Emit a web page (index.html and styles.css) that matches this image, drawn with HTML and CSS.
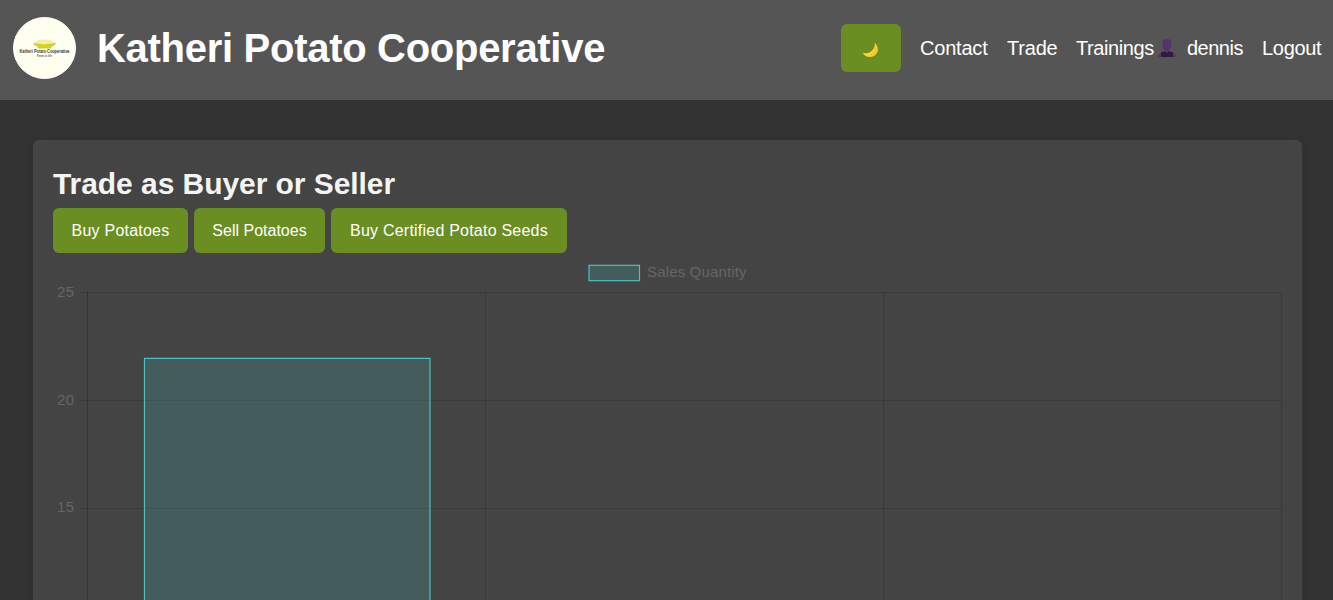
FILE: index.html
```html
<!DOCTYPE html>
<html lang="en">
<head>
<meta charset="utf-8">
<title>Katheri Potato Cooperative</title>
<link rel="stylesheet" href="styles.css">
</head>
<body>
<header class="site-header">
  <svg class="logo" viewBox="0 0 64 64" role="img" aria-label="Katheri Potato Cooperative">
    <ellipse cx="32.500" cy="32" rx="31" ry="30.500" fill="#fffff0" stroke="#fff" stroke-width="1"/>
    <ellipse cx="32.500" cy="26" rx="9" ry="2.600" fill="#f1efae"/>
    <path d="M21 26.800Q32 29.500 44 26.800L42.500 29.500H41L38.500 32.500H26.500L24 29.500H22.500Z" fill="#d3d222"/>
    <text class="logo-name" x="32.500" y="36.600" text-anchor="middle" textLength="50" lengthAdjust="spacingAndGlyphs">Katheri Potato Cooperative</text>
    <text class="logo-motto" x="32.500" y="40.500" text-anchor="middle" textLength="15" lengthAdjust="spacingAndGlyphs">Farm to life</text>
  </svg>
  <h1 class="site-title">Katheri Potato Cooperative</h1>
  <nav class="nav">
    <button class="theme-toggle" aria-label="Theme">
      <svg class="moon" viewBox="0 0 16 16"><path d="M13 1Q16 4 15.800 8.500Q14.500 14.800 8 15Q3 15 .5 10.500Q5 12.500 9 9.500Q13 6.500 13 1Z" fill="#fdcf35"/><path d="M13.800 6.500Q14 12.500 8 13" fill="none" stroke="#f4b52e" stroke-width="1"/></svg>
    </button>
    <a class="nav-link contact">Contact</a>
    <a class="nav-link trade">Trade</a>
    <a class="nav-link trainings">Trainings</a>
    <svg class="user" viewBox="0 0 18 18"><path d="M5 1Q9-1 13 1L13.500 5L14 6L13 8Q12 11 11 11V13H7V11Q5 10 5 8L4 6L4.500 5Z" fill="#55336b"/><path d="M0 18Q1 14 4 13.500L6.500 12.500L8 14H10L11.500 12.500L14 13.500Q17 14 18 18Z" fill="#55336b"/><path d="M3 18V13.300L7 12.300L8 13.500H10L11 12.300L15 13.300V18Z" fill="#321b42"/></svg>
    <a class="nav-link dennis">dennis</a>
    <a class="nav-link logout">Logout</a>
  </nav>
</header>
<main class="card">
  <h2 class="card-title">Trade as Buyer or Seller</h2>
  <div class="actions">
    <button class="action buy">Buy Potatoes</button>
    <button class="action sell">Sell Potatoes</button>
    <button class="action seeds">Buy Certified Potato Seeds</button>
  </div>
  <svg class="chart" viewBox="0 0 1229 347" width="1229" height="347">
    <g class="grid">
      <path d="M27 39.500H1229M27 147.500H1229M27 255.500H1229M432.500 39V347M830.500 39V347M1228.500 39V347"/>
      <path class="axis" d="M34.500 39V347"/>
    </g>
    <path class="bar" d="M91.500 347V105.300H377V347"/>
    <rect class="bar" x="536" y="12.300" width="50.500" height="15.400"/>
    <text class="label" x="594" y="24" textLength="99.500">Sales Quantity</text>
    <text class="label" x="4" y="44" textLength="17">25</text>
    <text class="label" x="4" y="152" textLength="17">20</text>
    <text class="label" x="4" y="259" textLength="17">15</text>
  </svg>
</main>
</body>
</html>
```
FILE: styles.css
```css
* { box-sizing: border-box; }
body {
  margin: 0;
  height: 600px;
  overflow: hidden;
  background: #333;
  color: #f4f4f4;
  font-family: "Liberation Sans", Arial, sans-serif;
}
.site-header {
  display: flex;
  align-items: center;
  height: 100px;
  padding: 0 11px 4px 12px;
  background: #555;
  color: #fff;
}
.logo { width: 64px; height: 64px; flex: none; }
.logo-name { font-size: 5.2px; font-weight: bold; fill: #35373c; }
.logo-motto { font-size: 3.6px; font-weight: bold; fill: #666; }
.site-title { margin: 0 0 0 21px; font-size: 40px; line-height: 46px; letter-spacing: -.29px; white-space: nowrap; }
.nav { display: flex; align-items: center; margin-left: auto; font-size: 20px; }
.nav-link { white-space: nowrap; letter-spacing: -.2px; }
.theme-toggle {
  display: flex;
  align-items: center;
  justify-content: center;
  width: 60px;
  height: 48px;
  margin-right: 19px;
  padding: 4px 2px 0 0;
  border: 0;
  border-radius: 6px;
  background: #6b8e23;
}
.moon { width: 16px; height: 16px; }
.contact { width: 87px; }
.trade { width: 69px; }
.nav .trainings { width: 82px; letter-spacing: -.4px; }
.user { width: 18px; height: 18px; margin-right: 11px; }
.nav .dennis { width: 75px; letter-spacing: -.5px; }
.nav .logout { width: 60px; letter-spacing: -.3px; }
.card {
  height: 460px;
  margin: 40px 31px 0 33px;
  padding: 26px 20px 0;
  border-radius: 6px 6px 0 0;
  background: #444;
  box-shadow: 0 0 10px rgba(0, 0, 0, .1);
}
.card-title { margin: 0 0 7px; font-size: 30px; line-height: 35px; letter-spacing: -.06px; }
.actions { display: flex; gap: 6px; }
.action {
  height: 45px;
  padding: 0;
  border: 0;
  border-radius: 6px;
  background: #6b8e23;
  color: #fff;
  font: 16px/45px "Liberation Sans", Arial, sans-serif;
  letter-spacing: .22px;
  white-space: nowrap;
}
.buy { width: 135px; }
.action.sell { width: 131px; letter-spacing: 0; }
.seeds { width: 236px; }
.chart { display: block; }
.grid path { fill: none; stroke: rgba(0, 0, 0, .13); stroke-width: 1; }
.grid .axis { stroke: rgba(0, 0, 0, .25); }
.bar { fill: rgba(75, 192, 192, .2); stroke: #4bc0c0; stroke-width: 1.2; }
.label { fill: #666; font-size: 15px; }
```
